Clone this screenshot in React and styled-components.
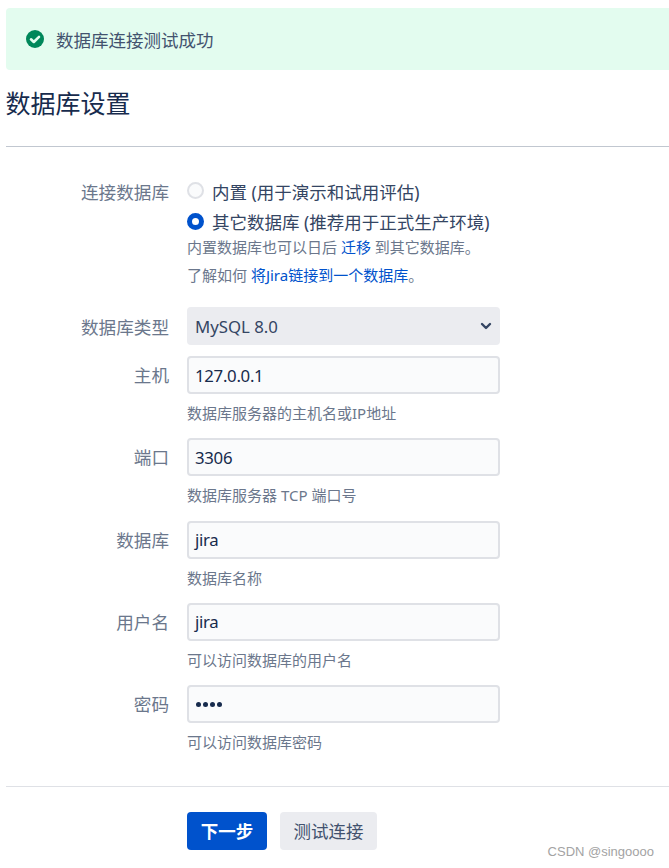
import React from "react";
import styled, { createGlobalStyle } from "styled-components";

const Global = createGlobalStyle`
  html, body { margin: 0; padding: 0; background: #fff; }
  body { font-family: "Noto Sans", "Noto Sans CJK SC", sans-serif; color: #172b4d; }
  * { box-sizing: border-box; }
`;

const Page = styled.div`
  position: relative;
  width: 669px;
  height: 868px;
  overflow: hidden;
  padding: 8px 0 0 6px;
`;
const Banner = styled.div`
  display: flex;
  align-items: center;
  gap: 12px;
  height: 62px;
  padding-left: 20px;
  background: #e3fcef;
  border-radius: 4px 0 0 4px;
  font-size: 17.5px;
  color: #42526e;
`;
const Title = styled.h1`
  margin: 17px 0 0;
  height: 32px;
  line-height: 32px;
  font-size: 25px;
  font-weight: 400;
  color: #172b4d;
  text-indent: -0.5px;
`;
const Rule = styled.hr`
  margin: ${(p) => p.$top}px 0 0;
  border: 0;
  height: 1px;
  background: ${(p) => p.$color};
`;
const Form = styled.div`
  display: grid;
  grid-template-columns: 163px 313px;
  column-gap: 18px;
  margin-top: 27px;
`;
const Label = styled.div`
  text-align: right;
  font-size: 17.6px;
  line-height: 32px;
  color: #6b778c;
  padding-top: ${(p) => p.$top || 0}px;
`;
const Field = styled.div`
  display: flex;
  flex-direction: column;
  height: ${(p) => p.$h}px;
`;
const RadioRow = styled.div`
  display: flex;
  align-items: center;
  gap: 8px;
  height: 30px;
  margin-top: ${(p) => p.$top}px;
  margin-bottom: ${(p) => p.$bottom}px;
  font-size: 17.5px;
  color: #344563;
  white-space: nowrap;
`;
const Radio = styled.span`
  width: 17px;
  height: 17px;
  border-radius: 50%;
  flex: none;
  margin-bottom: ${(p) => (p.$on ? 0 : 2)}px;
  background: ${(p) => (p.$on ? "#fff" : "#fafbfc")};
  border: ${(p) => (p.$on ? "5px solid #0052cc" : "2px solid #dfe1e6")};
`;
const Hint = styled.div`
  font-size: 15px;
  line-height: 20px;
  color: #6b778c;
  white-space: nowrap;
  margin-top: ${(p) => p.$top}px;
`;
const A = styled.a`
  color: #0052cc;
  text-decoration: none;
`;
const Select = styled.div`
  display: flex;
  align-items: center;
  justify-content: space-between;
  height: 38px;
  padding: 0 7px 0 8px;
  background: #ebecf0;
  border-radius: 4px;
  font-size: 16.8px;
  color: #344563;
`;
const Input = styled.div`
  display: flex;
  align-items: center;
  height: 38px;
  padding: 0 6px;
  background: #fafbfc;
  border: 2px solid #dfe1e6;
  border-radius: 4px;
  font-size: 16.8px;
  letter-spacing: -0.3px;
  color: #172b4d;
`;
const Dots = styled.span`
  display: flex;
  gap: 2px;
  padding-left: 1px;
`;
const Dot = styled.i`
  width: 5px;
  height: 5px;
  border-radius: 50%;
  background: #172b4d;
`;
const Footer = styled.div`
  display: flex;
  gap: 13px;
  margin: 25px 0 0 181px;
`;
const Button = styled.button`
  height: 38px;
  padding: 0 ${(p) => (p.$primary ? 13.75 : 13.5)}px;
  border: 0;
  border-radius: 4px;
  font-family: inherit;
  font-size: 17.5px;
  font-weight: ${(p) => (p.$primary ? 700 : 400)};
  background: ${(p) => (p.$primary ? "#0052cc" : "#ebecf0")};
  color: ${(p) => (p.$primary ? "#fff" : "#42526e")};
`;
const Watermark = styled.div`
  position: absolute;
  right: 15px;
  top: 843px;
  font-size: 13px;
  line-height: 18px;
  color: #a3a3a3;
  font-family: "Liberation Sans", sans-serif;
`;

const rows = [
  ["主机", "127.0.0.1", "数据库服务器的主机名或IP地址"],
  ["端口", "3306", "数据库服务器 TCP 端口号"],
  ["数据库", "jira", "数据库名称"],
  ["用户名", "jira", "可以访问数据库的用户名"],
  ["密码", null, "可以访问数据库密码"],
];

const Check = () => (
  <svg width="18" height="18" viewBox="0 0 18 18">
    <circle cx="9" cy="9" r="9" fill="#00875a" />
    <path d="M5 9.3l2.8 2.7L13 6.8" fill="none" stroke="#e3fcef" strokeWidth="2.6" strokeLinecap="round" strokeLinejoin="round" />
  </svg>
);

const Chevron = () => (
  <svg width="14" height="14" viewBox="0 0 14 14">
    <path d="M3 5l4 4 4-4" fill="none" stroke="#344563" strokeWidth="2.4" strokeLinecap="round" strokeLinejoin="round" />
  </svg>
);

export default function App() {
  return (
    <Page>
      <Global />
      <Banner>
        <Check />
        <span>数据库连接测试成功</span>
      </Banner>
      <Title>数据库设置</Title>
      <Rule $top={27} $color="#c1c7d0" />
      <Form>
        <Label $top={2}>连接数据库</Label>
        <Field $h={133}>
          <RadioRow $top={2} $bottom={0}>
            <Radio />
            内置 (用于演示和试用评估)
          </RadioRow>
          <RadioRow $top={0} $bottom={2}>
            <Radio $on />
            其它数据库 (推荐用于正式生产环境)
          </RadioRow>
          <Hint $top={-1}>
            内置数据库也可以日后 <A>迁移</A> 到其它数据库。
          </Hint>
          <Hint $top={8}>
            了解如何 <A>将Jira链接到一个数据库</A>。
          </Hint>
        </Field>
        <Label $top={4}>数据库类型</Label>
        <Field $h={49}>
          <Select>
            MySQL 8.0
            <Chevron />
          </Select>
        </Field>
        {rows.map(([label, value, hint]) => (
          <React.Fragment key={label}>
            <Label $top={3}>{label}</Label>
            <Field $h={82.3}>
              <Input>
                {value ?? (
                  <Dots>
                    <Dot />
                    <Dot />
                    <Dot />
                    <Dot />
                  </Dots>
                )}
              </Input>
              <Hint $top={9}>{hint}</Hint>
            </Field>
          </React.Fragment>
        ))}
      </Form>
      <Rule $top={18.5} $color="#dfe1e6" />
      <Footer>
        <Button $primary>下一步</Button>
        <Button>测试连接</Button>
      </Footer>
      <Watermark>CSDN @singoooo</Watermark>
    </Page>
  );
}
